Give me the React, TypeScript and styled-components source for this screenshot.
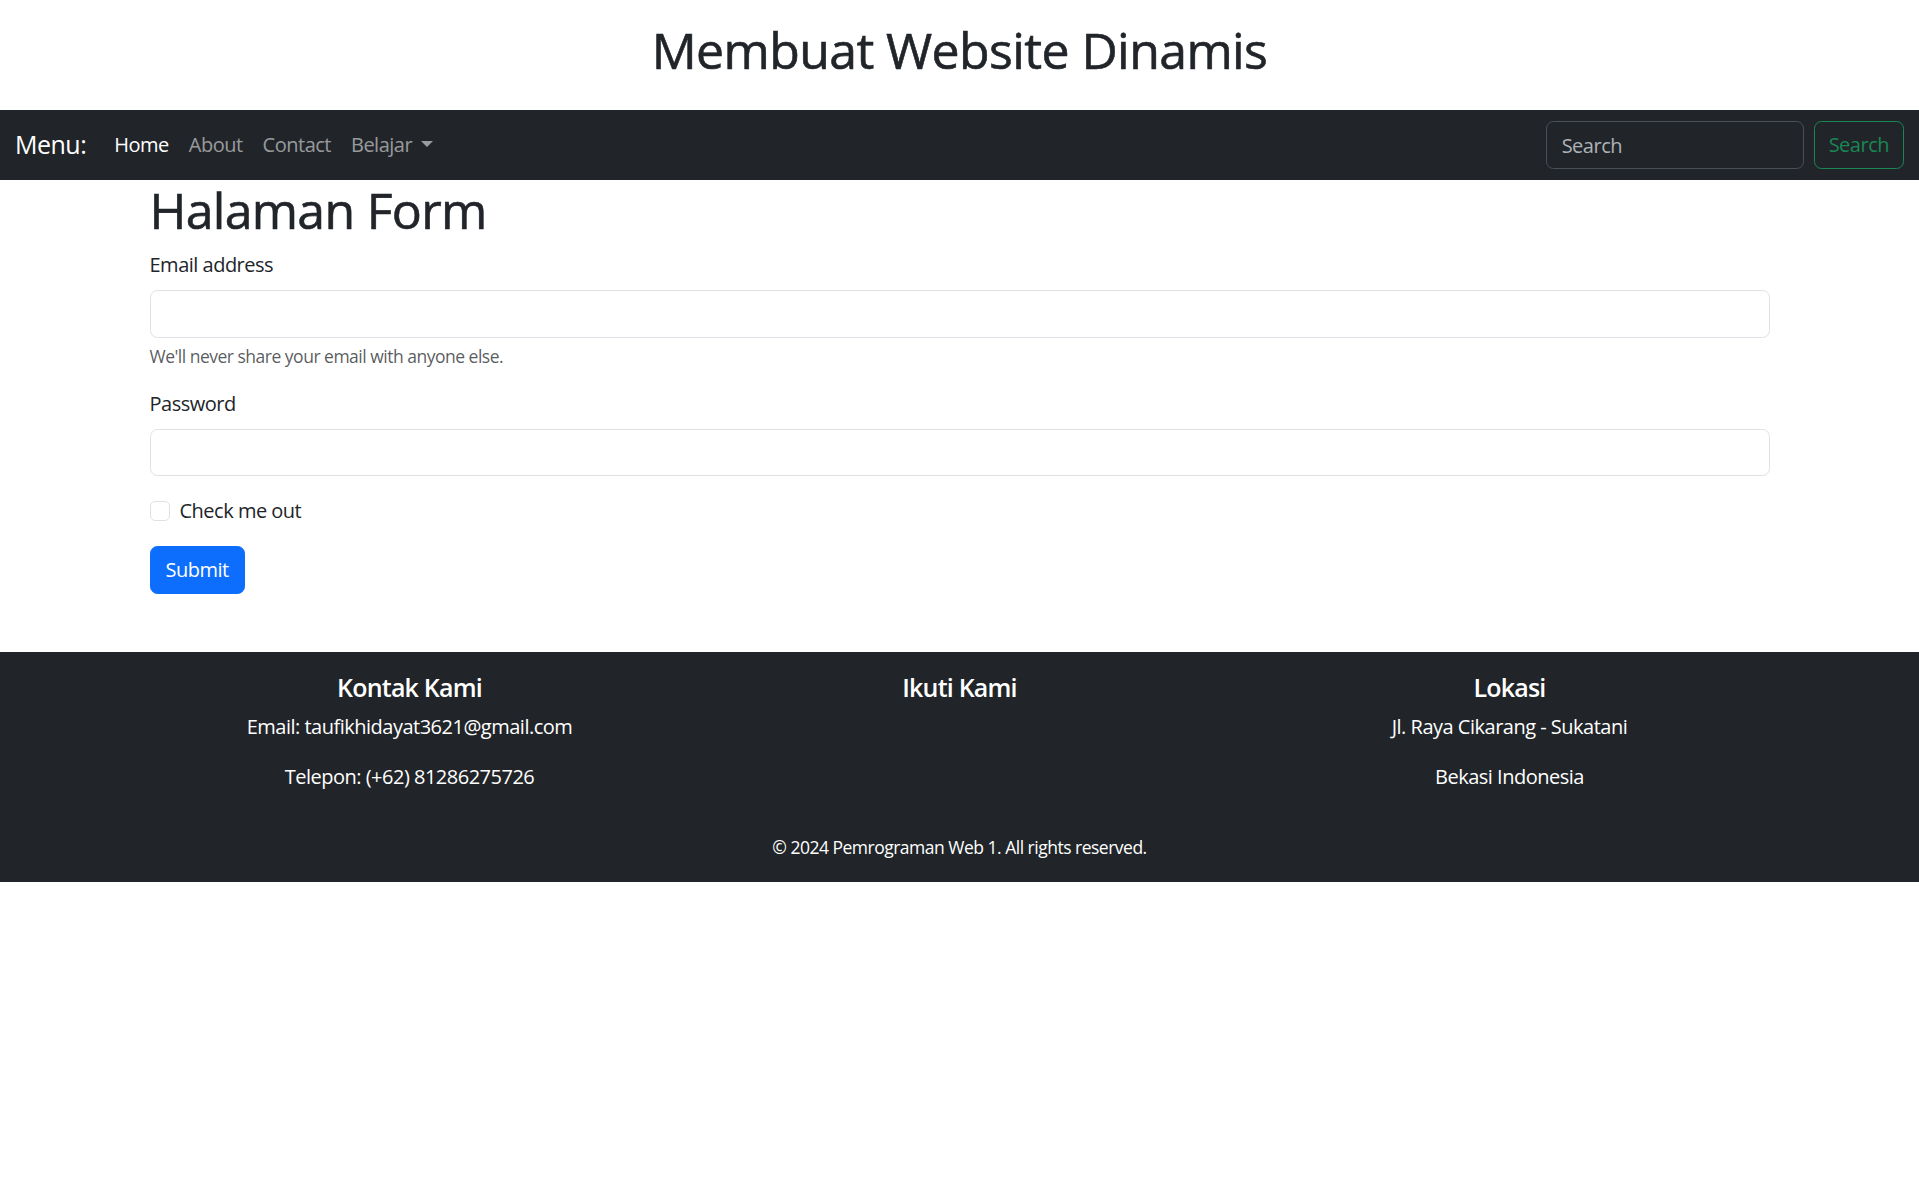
import React from "react";
import styled, { createGlobalStyle } from "styled-components";

const FONT = `"Open Sans", "Noto Sans", "Liberation Sans", sans-serif`;

const GlobalStyle = createGlobalStyle`
  *, *::before, *::after { box-sizing: border-box; }
  html, body { margin: 0; padding: 0; }
  body {
    font-family: ${FONT};
    font-size: 20px;
    line-height: 1.5;
    letter-spacing: -0.025em;
    color: #212529;
    background: #ffffff;
    -webkit-font-smoothing: antialiased;
  }
  input, button { letter-spacing: -0.025em; }
`;

const Header = styled.header`
  padding: 20px 0;
  text-align: center;
`;

const PageTitle = styled.h1`
  margin: 0 0 10px;
  font-size: 50px;
  font-weight: 500;
  line-height: 1.2;
  letter-spacing: -0.6px;
  color: #212529;
  -webkit-text-stroke: 0.6px #212529;
`;

const Navbar = styled.nav`
  display: flex;
  align-items: center;
  justify-content: space-between;
  background: #212529;
  padding: 10px 15px;
`;

const NavLeft = styled.div`
  display: flex;
  align-items: center;
`;

const Brand = styled.a`
  font-size: 25px;
  line-height: 1.5;
  padding: 6.25px 0;
  margin-right: 18px;
  color: #ffffff;
  text-decoration: none;
`;

const NavList = styled.ul`
  display: flex;
  align-items: center;
  list-style: none;
  margin: 0;
  padding: 0;
`;

const NavLink = styled.a<{ $active?: boolean }>`
  display: flex;
  align-items: center;
  padding: 10px;
  font-size: 20px;
  line-height: 1.5;
  color: ${(p) => (p.$active ? "#ffffff" : "rgba(255, 255, 255, 0.55)")};
  text-decoration: none;
`;

const Caret = styled.span`
  display: inline-block;
  margin-left: 9px;
  margin-top: -2px;
  border-top: 6px solid currentColor;
  border-right: 6px solid transparent;
  border-left: 6px solid transparent;
  border-bottom: 0;
`;

const SearchForm = styled.form`
  display: flex;
  align-items: center;
  gap: 10px;
`;

const SearchInput = styled.input`
  width: 258px;
  height: 47.5px;
  padding: 7.5px 15px;
  font-family: ${FONT};
  font-size: 20px;
  line-height: 1.5;
  color: #dee2e6;
  background: #212529;
  border: 1px solid #495057;
  border-radius: 7.5px;
  outline: none;
  &::placeholder {
    color: rgba(222, 226, 230, 0.75);
  }
`;

const OutlineButton = styled.button`
  height: 47.5px;
  padding: 7.5px 14px;
  font-family: ${FONT};
  font-size: 20px;
  line-height: 1.5;
  color: #198754;
  background: transparent;
  border: 1px solid #198754;
  border-radius: 7.5px;
`;

const Container = styled.div`
  max-width: 1650px;
  margin: 0 auto;
  padding: 0 15px;
`;

const Main = styled(Container)`
  padding-bottom: 58px;
`;

const SectionTitle = styled.h1`
  margin: 0 0 10px;
  font-size: 50px;
  font-weight: 500;
  line-height: 1.2;
  letter-spacing: -0.7px;
  -webkit-text-stroke: 0.6px #212529;
`;

const Field = styled.div<{ $gap?: number }>`
  margin-bottom: ${(p) => p.$gap ?? 20}px;
`;

const Label = styled.label`
  display: inline-block;
  margin-bottom: 10px;
  font-size: 20px;
`;

const Input = styled.input`
  display: block;
  width: 100%;
  height: 47.5px;
  padding: 7.5px 15px;
  font-family: ${FONT};
  font-size: 20px;
  color: #212529;
  background: #ffffff;
  border: 1px solid #dee2e6;
  border-radius: 7.5px;
  outline: none;
`;

const HelpText = styled.div`
  margin-top: 5px;
  font-size: 17.5px;
  line-height: 1.5;
  color: rgba(33, 37, 41, 0.75);
`;

const CheckRow = styled.div`
  display: flex;
  align-items: center;
  gap: 10px;
  min-height: 30px;
  margin-bottom: 20px;
`;

const CheckBox = styled.span`
  display: inline-block;
  width: 20px;
  height: 20px;
  border: 1px solid #dee2e6;
  border-radius: 5px;
  background: #ffffff;
`;

const CheckLabel = styled.label`
  font-size: 20px;
`;

const PrimaryButton = styled.button`
  height: 47.5px;
  padding: 7.5px 15px;
  font-family: ${FONT};
  font-size: 20px;
  line-height: 1.5;
  color: #ffffff;
  background: #0d6efd;
  border: 1px solid #0d6efd;
  border-radius: 7.5px;
`;

const Footer = styled.footer`
  background: #212529;
  color: #ffffff;
  padding: 20px 0;
`;

const FooterRow = styled.div`
  display: grid;
  grid-template-columns: repeat(3, 1fr);
  margin: 0 -15px;
  text-align: center;
`;

const FooterCol = styled.div`
  padding: 0 15px;
`;

const FooterHeading = styled.h5`
  margin: 0 0 10px;
  font-size: 25px;
  font-weight: 600;
  line-height: 1.2;
  letter-spacing: -0.8px;
`;

const FooterText = styled.p`
  margin: 0 0 20px;
  font-size: 20px;
`;

const Copyright = styled.div`
  margin-top: 20px;
  text-align: center;
  font-size: 17.5px;
  line-height: 30px;
`;

export default function App() {
  return (
    <>
      <GlobalStyle />
      <Header>
        <PageTitle>Membuat Website Dinamis</PageTitle>
      </Header>
      <Navbar>
        <NavLeft>
          <Brand href="#">Menu:</Brand>
          <NavList>
            <li>
              <NavLink href="#" $active>
                Home
              </NavLink>
            </li>
            <li>
              <NavLink href="#">About</NavLink>
            </li>
            <li>
              <NavLink href="#">Contact</NavLink>
            </li>
            <li>
              <NavLink href="#">
                Belajar
                <Caret />
              </NavLink>
            </li>
          </NavList>
        </NavLeft>
        <SearchForm onSubmit={(e) => e.preventDefault()}>
          <SearchInput type="search" placeholder="Search" aria-label="Search" />
          <OutlineButton type="submit">Search</OutlineButton>
        </SearchForm>
      </Navbar>
      <Main>
        <SectionTitle>Halaman Form</SectionTitle>
        <form onSubmit={(e) => e.preventDefault()}>
          <Field>
            <Label htmlFor="email">Email address</Label>
            <Input id="email" type="email" />
            <HelpText>We'll never share your email with anyone else.</HelpText>
          </Field>
          <Field>
            <Label htmlFor="password">Password</Label>
            <Input id="password" type="password" />
          </Field>
          <CheckRow>
            <CheckBox />
            <CheckLabel>Check me out</CheckLabel>
          </CheckRow>
          <PrimaryButton type="submit">Submit</PrimaryButton>
        </form>
      </Main>
      <Footer>
        <Container>
          <FooterRow>
            <FooterCol>
              <FooterHeading>Kontak Kami</FooterHeading>
              <FooterText>Email: taufikhidayat3621@gmail.com</FooterText>
              <FooterText>Telepon: (+62) 81286275726</FooterText>
            </FooterCol>
            <FooterCol>
              <FooterHeading>Ikuti Kami</FooterHeading>
            </FooterCol>
            <FooterCol>
              <FooterHeading>Lokasi</FooterHeading>
              <FooterText>Jl. Raya Cikarang - Sukatani</FooterText>
              <FooterText>Bekasi Indonesia</FooterText>
            </FooterCol>
          </FooterRow>
          <Copyright>© 2024 Pemrograman Web 1. All rights reserved.</Copyright>
        </Container>
      </Footer>
    </>
  );
}
